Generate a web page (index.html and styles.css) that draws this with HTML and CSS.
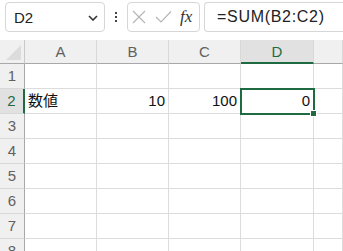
FILE: index.html
```html
<!DOCTYPE html>
<html lang="ja">
<head>
    <meta charset="UTF-8">
    <title>Sheet</title>
    <link rel="stylesheet" href="styles.css">
</head>
<body>
    <div class="formula-bar">
        <div class="name-box">
            <span>D2</span>
            <svg class="chevron" width="10" height="6" viewBox="0 0 10 6"><path d="M1 1 L5 5 L9 1" fill="none" stroke="#333" stroke-width="1.6"/></svg>
        </div>
        <div class="grip"><i></i><i></i><i></i></div>
        <div class="fx-box">
            <svg width="14" height="14" viewBox="0 0 14 14"><path d="M1 1 L13 13 M13 1 L1 13" stroke="#b4b4b4" stroke-width="1.1" fill="none"/></svg>
            <svg width="17" height="14" viewBox="0 0 17 14"><path d="M1 7 L6 12 L16 1.5" stroke="#b4b4b4" stroke-width="1.1" fill="none"/></svg>
            <span class="fx">fx</span>
        </div>
        <div class="formula">=SUM(B2:C2)</div>
    </div>

    <div class="sheet">
        <div class="corner"></div>
        <div class="col-head">A</div>
        <div class="col-head">B</div>
        <div class="col-head">C</div>
        <div class="col-head active">D</div>
        <div class="col-head"></div>

        <div class="row-head">1</div>
        <div class="cell"></div><div class="cell"></div><div class="cell"></div><div class="cell"></div><div class="cell"></div>

        <div class="row-head active">2</div>
        <div class="cell">数値</div>
        <div class="cell num">10</div>
        <div class="cell num">100</div>
        <div class="cell num selected">0<span class="handle"></span></div>
        <div class="cell"></div>

        <div class="row-head">3</div>
        <div class="cell"></div><div class="cell"></div><div class="cell"></div><div class="cell"></div><div class="cell"></div>
        <div class="row-head">4</div>
        <div class="cell"></div><div class="cell"></div><div class="cell"></div><div class="cell"></div><div class="cell"></div>
        <div class="row-head">5</div>
        <div class="cell"></div><div class="cell"></div><div class="cell"></div><div class="cell"></div><div class="cell"></div>
        <div class="row-head">6</div>
        <div class="cell"></div><div class="cell"></div><div class="cell"></div><div class="cell"></div><div class="cell"></div>
        <div class="row-head">7</div>
        <div class="cell"></div><div class="cell"></div><div class="cell"></div><div class="cell"></div><div class="cell"></div>
        <div class="row-head">8</div>
        <div class="cell"></div><div class="cell"></div><div class="cell"></div><div class="cell"></div><div class="cell"></div>
    </div>
</body>
</html>
```

FILE: styles.css
```css
body {
    margin: 0;
    background: #fff;
    font-family: "Liberation Sans", "Noto Sans CJK JP", sans-serif;
    overflow: hidden;
}

.formula-bar {
    display: flex;
    height: 40px;
    padding: 2px 0 0 5px;
    box-sizing: border-box;
    align-items: flex-start;
}

.name-box {
    width: 100px;
    height: 30px;
    box-sizing: border-box;
    border: 1px solid #d6d6d6;
    border-radius: 4px;
    display: flex;
    align-items: center;
    justify-content: space-between;
    padding: 0 6px 0 8px;
    font-size: 15px;
    color: #222;
}

.chevron {
    margin-top: 1px;
}

.grip {
    width: 22px;
    height: 30px;
    display: flex;
    flex-direction: column;
    align-items: center;
    justify-content: center;
    gap: 2px;
}

.grip i {
    width: 2px;
    height: 2px;
    background: #444;
}

.fx-box {
    width: 73px;
    height: 30px;
    box-sizing: border-box;
    border: 1px solid #d6d6d6;
    border-radius: 4px;
    display: flex;
    align-items: center;
    padding-left: 4px;
    gap: 9px;
}

.fx {
    font-family: "Liberation Serif", serif;
    font-style: italic;
    font-size: 17px;
    color: #333;
    margin-left: -1px;
}

.formula {
    flex: 1;
    margin-left: 4px;
    height: 30px;
    box-sizing: border-box;
    border: 1px solid #d6d6d6;
    border-right: none;
    border-radius: 4px 0 0 4px;
    padding-left: 12px;
    line-height: 28px;
    font-size: 16px;
    letter-spacing: 0.7px;
    color: #222;
}

.sheet {
    display: grid;
    grid-template-columns: 25px 72px 72px 72px 73px 1fr;
    grid-template-rows: 24px repeat(8, 25px);
}

.corner,
.col-head,
.row-head {
    background: #f0f0f0;
    color: #616161;
    box-sizing: border-box;
}

.corner {
    border-right: 1px solid #c8c8c8;
    border-bottom: 1px solid #a8a8a8;
    position: relative;
}

.corner::after {
    content: "";
    position: absolute;
    right: 3px;
    bottom: 3px;
    border-left: 15px solid transparent;
    border-bottom: 15px solid #dcdcdc;
}

.col-head {
    border-right: 1px solid #d8d8d8;
    border-bottom: 1px solid #a8a8a8;
    text-align: center;
    font-size: 15px;
    line-height: 23px;
}

.col-head.active {
    background: #e1e1e1;
    color: #1e6b41;
    border-bottom: 2px solid #1e6b41;
}

.row-head {
    border-right: 1px solid #a8a8a8;
    border-bottom: 1px solid #d8d8d8;
    text-align: center;
    font-size: 15px;
    line-height: 24px;
}

.row-head.active {
    background: #e1e1e1;
    color: #1e6b41;
    border-right: 2px solid #1e6b41;
}

.cell {
    border-right: 1px solid #dcdcdc;
    border-bottom: 1px solid #dcdcdc;
    box-sizing: border-box;
    font-size: 15px;
    line-height: 24px;
    padding: 0 3px;
    color: #111;
}

.num {
    text-align: right;
}

.selected {
    position: relative;
    outline: 2px solid #1e6b41;
    outline-offset: -1px;
}

.handle {
    position: absolute;
    right: -4px;
    bottom: -4px;
    width: 5px;
    height: 5px;
    background: #1e6b41;
    border: 1px solid #fff;
}
```
